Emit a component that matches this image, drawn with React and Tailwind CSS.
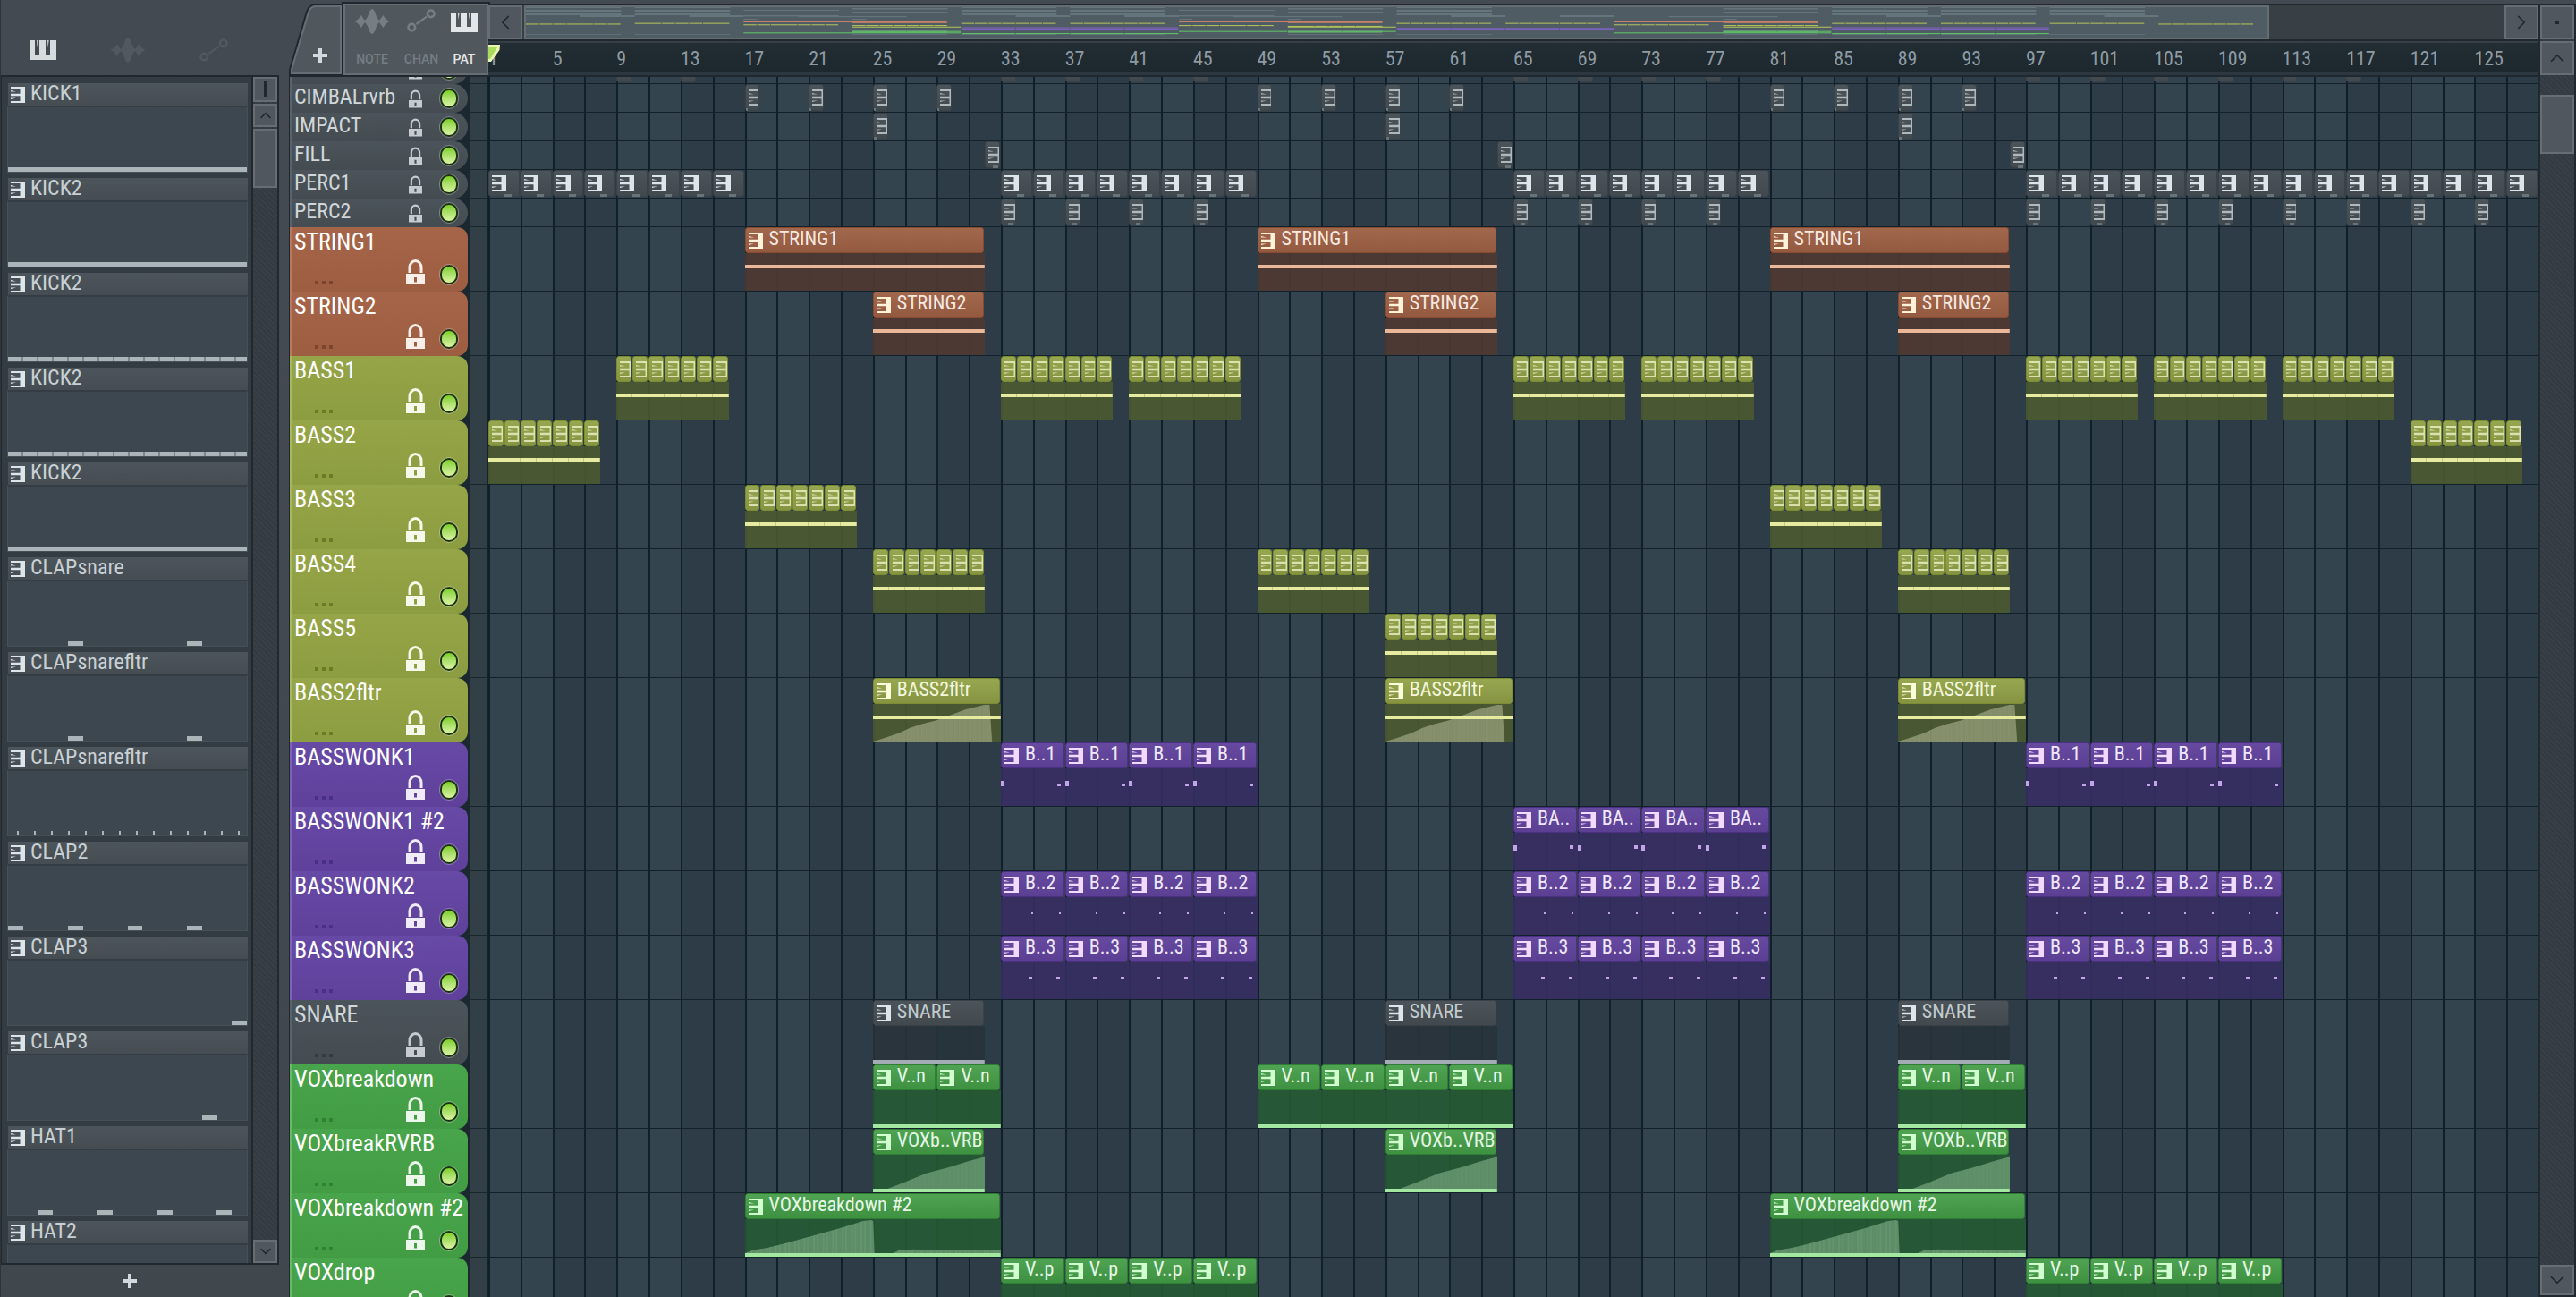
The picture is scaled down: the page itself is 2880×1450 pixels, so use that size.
import { ChevronDown, ChevronLeft, ChevronRight, ChevronUp } from "lucide-react";

const BARS = 128;

const THEMES = {
  grey: {
    header: "bg-linear-to-b from-[#4b545a] to-[#444c51] border-l-[#5a636a] text-[#d0d6d9]",
    clip: "bg-linear-to-b from-[#4b545a] to-[#42494e] border-[#3a4248] text-[#c3cacd]",
    body: "bg-[#28333b]/90",
    line: "bg-[#a3abb4]",
    note: "bg-[#69737a]",
    icon: "text-[#dbe5ea]",
    lock: "text-[#c5cbcf]",
    dots: "bg-[#343c42]",
    map: "#6b7a80",
  },
  orange: {
    header: "bg-linear-to-b from-[#a66548] to-[#9d5d41] border-l-[#b87a5f] text-white",
    clip: "bg-linear-to-b from-[#a2684d] to-[#945a41] border-[#8a4a2e] text-[#f6e9e2]",
    body: "bg-[#503931]/90",
    line: "bg-[#ebb799]",
    note: "bg-[#ebb799]",
    icon: "text-[#fff2d8]",
    lock: "text-[#f8efeb]",
    dots: "bg-[#7d452d]",
    map: "#c98169",
  },
  olive: {
    header: "bg-linear-to-b from-[#95a547] to-[#8c9c40] border-l-[#a9b85f] text-white",
    clip: "bg-linear-to-b from-[#97a750] to-[#869442] border-[#7c8c30] text-[#f3f6dc]",
    body: "bg-[#4b5a30]/90",
    line: "bg-[#e6eba0]",
    note: "bg-[#e6eba0]",
    icon: "text-[#fcffda]",
    lock: "text-[#f6f8ec]",
    dots: "bg-[#6b7a24]",
    map: "#b8c65c",
  },
  purple: {
    header: "bg-linear-to-b from-[#674aa6] to-[#5f419b] border-l-[#7d62b8] text-white",
    clip: "bg-linear-to-b from-[#664aa0] to-[#5a3f93] border-[#4b3084] text-[#f0e8fa]",
    body: "bg-[#362d62]/90",
    line: "bg-[#c3a3ea]",
    note: "bg-[#c3a3ea]",
    icon: "text-[#f2daff]",
    lock: "text-[#efebf8]",
    dots: "bg-[#4a2f86]",
    map: "#8465cf",
  },
  green: {
    header: "bg-linear-to-b from-[#49a54b] to-[#419c43] border-l-[#68b969] text-white",
    clip: "bg-linear-to-b from-[#4fa352] to-[#3f9142] border-[#2f7f33] text-[#e5f7e4]",
    body: "bg-[#255a33]/90",
    line: "bg-[#a3e8a0]",
    note: "bg-[#a3e8a0]",
    icon: "text-[#d2ffcf]",
    lock: "text-[#edf8ec]",
    dots: "bg-[#2f8233]",
    map: "#63c86a",
  },
};

const every = (step, count, ...starts) =>
  starts.flatMap((s) => Array.from({ length: count }, (_, i) => s + i * step));

// notes are [x, y, width, height] inside a clip
const LANES = [
  { name: "", small: true, theme: "grey", len: 1, clips: [9, 13, 33, 37, 41, 45, 65, 69, 73, 77, 97, 101, 105, 109, 113, 117] },
  { name: "CIMBALrvrb", small: true, theme: "grey", len: 1, clips: every(4, 4, 17, 49, 81), faded: true, notes: [[1, 27, 2, 3]] },
  { name: "IMPACT", small: true, theme: "grey", len: 1, clips: [25, 57, 89], faded: true, notes: [[1, 27, 3, 3]] },
  { name: "FILL", small: true, theme: "grey", len: 1, clips: [32, 64, 96], faded: true, notes: [[9, 27, 6, 3]] },
  { name: "PERC1", small: true, theme: "grey", len: 2, clips: [...every(2, 8, 1, 33, 65), ...every(2, 16, 97)], notes: [[18, 27, 8, 3]] },
  { name: "PERC2", small: true, theme: "grey", len: 1, clips: [...every(4, 4, 33, 65), ...every(4, 8, 97)], faded: true, notes: [[8, 27, 5, 3]] },
  { name: "STRING1", theme: "orange", len: 15, clips: [17, 49, 81], label: "STRING1", line: "mid" },
  { name: "STRING2", theme: "orange", len: 7, clips: [25, 57, 89], label: "STRING2", line: "mid" },
  { name: "BASS1", theme: "olive", len: 1, clips: every(1, 7, 9, 33, 41, 65, 73, 97, 105, 113), faded: true, line: "mid" },
  { name: "BASS2", theme: "olive", len: 1, clips: every(1, 7, 1, 121), faded: true, line: "mid" },
  { name: "BASS3", theme: "olive", len: 1, clips: every(1, 7, 17, 81), faded: true, line: "mid" },
  { name: "BASS4", theme: "olive", len: 1, clips: every(1, 7, 25, 49, 89), faded: true, line: "mid" },
  { name: "BASS5", theme: "olive", len: 1, clips: every(1, 7, 57), faded: true, line: "mid" },
  { name: "BASS2fltr", theme: "olive", len: 8, clips: [25, 57, 89], label: "BASS2fltr", line: "mid", ramp: "filter" },
  { name: "BASSWONK1", theme: "purple", len: 4, clips: every(4, 4, 33, 97), label: "B..1", notes: [[0, 43, 4, 6], [63, 46, 4, 3]] },
  { name: "BASSWONK1 #2", theme: "purple", len: 4, clips: every(4, 4, 65), label: "BA..", notes: [[0, 43, 4, 6], [63, 43, 4, 4]] },
  { name: "BASSWONK2", theme: "purple", len: 4, clips: every(4, 4, 33, 65, 97), label: "B..2", notes: [[34, 46, 2, 2], [65, 46, 2, 2]] },
  { name: "BASSWONK3", theme: "purple", len: 4, clips: every(4, 4, 33, 65, 97), label: "B..3", notes: [[31, 46, 4, 3], [62, 46, 4, 3]] },
  { name: "SNARE", theme: "grey", len: 7, clips: [25, 57, 89], label: "SNARE", line: "low" },
  { name: "VOXbreakdown", theme: "green", len: 4, clips: [25, 29, 49, 53, 57, 61, 89, 93], label: "V..n", line: "low" },
  { name: "VOXbreakRVRB", theme: "green", len: 7, clips: [25, 57, 89], label: "VOXb..VRB", line: "low", ramp: "reverb" },
  { name: "VOXbreakdown #2", theme: "green", len: 16, clips: [17, 81], label: "VOXbreakdown #2", line: "low", ramp: "drop" },
  { name: "VOXdrop", theme: "green", len: 4, clips: every(4, 4, 33, 97), label: "V..p" },
];

const RAMPS = {
  filter: "M0 41L7 38L20 32L29 26L38 22L49 18L61 12L72 6L87 1L91 1L93 41Z",
  reverb: "M0 41L11 38L28 30L48 20L67 14L85 7L100 2V41Z",
  drop: "M0 37L3 34L9 31L16 26L29 16L38 9L46 2L49 1L50 2L50.5 38L57 38L60 34L66 33L68 34H100V41H0Z",
};

const FULL = [[0, 100]];
const PICKER = [
  { name: "KICK1", notes: FULL },
  { name: "KICK2", notes: FULL },
  { name: "KICK2", notes: FULL, ticks: true },
  { name: "KICK2", notes: FULL, ticks: true },
  { name: "KICK2", notes: FULL },
  { name: "CLAPsnare", notes: [[25, 6.3], [75, 6.3]] },
  { name: "CLAPsnarefltr", notes: [[25, 6.3], [75, 6.3]] },
  { name: "CLAPsnarefltr", notes: Array.from({ length: 14 }, (_, i) => [3.7 + i * 7.12, 0.9]) },
  { name: "CLAP2", notes: [[0, 6.3], [25, 6.3], [50, 6.3], [75, 6.3]] },
  { name: "CLAP3", notes: [[93.7, 6.3]] },
  { name: "CLAP3", notes: [[81.2, 6.3]] },
  { name: "HAT1", notes: [[12.5, 6.3], [37.5, 6.3], [62.5, 6.3], [87.3, 6.3]] },
  { name: "HAT2", notes: [] },
];

// Overview rows for the tracks scrolled out above: [y, height, start, bars]
const HIDDEN_ROWS = [
  ...[1, 9, 33, 41, 65, 97, 105, 113].flatMap((s) => [[0, 1, s, 7], [3, 2, s, 7], [7, 2, s, 7], [15, 0.8, s, 7], [30, 0.8, s, 7]]),
  ...[17, 49].flatMap((s) => [[3, 1, s, 7], [9, 1.4, s, 7], [13, 1, s, 1]]),
  ...[25, 57, 89].flatMap((s) => [[1, 1.5, s, 7], [5, 1.5, s, 7], [10, 1.2, s - 4, 8], [13, 1.2, s, 1], [30, 0.8, s, 7]]),
  ...[5, 13, 37, 45, 69, 77, 101, 117].map((s) => [9, 2, s, 4]),
];

const btn = "flex items-center justify-center border-2 border-[#666d73] bg-[#50575e] text-[#20272d]";
const hatch = "bg-[repeating-linear-gradient(45deg,#333a42_0_2px,#384047_2px_4px)]";

const KeysSide = ({ className }) => (
  <svg viewBox="0 0 16 18" className={className} fill="currentColor" aria-hidden="true">
    <path d="M0 0H16V18H0V16H10.5V10.2H0V7.8H10.5V2H0Z" />
    <path d="M0 4L6 5.4H0ZM0 12.5H6L0 14Z" />
  </svg>
);

const Keys = ({ className }) => (
  <svg viewBox="0 0 30 22" className={className} fill="currentColor" aria-hidden="true">
    <path d="M0 0H6V16H11V0H18V16H23V0H30V22H0Z" />
    <path d="M8 0H9.6L8.6 8ZM20 0H21.6L20.6 8Z" />
  </svg>
);

const Wave = ({ className }) => (
  <svg viewBox="0 0 40 28" className={className} fill="currentColor" aria-hidden="true">
    <path d="M0 14Q4 13 7 8Q8 6 9 9L12 13Q15 10 17 3Q20 -3 23 3Q25 10 28 13L31 9Q32 6 33 8Q36 13 40 14Q36 15 33 20Q32 22 31 19L28 15Q25 18 23 25Q20 31 17 25Q15 18 12 15L9 19Q8 22 7 20Q4 15 0 14Z" />
  </svg>
);

const Automation = ({ className }) => (
  <svg viewBox="0 0 32 26" className={className} fill="none" stroke="currentColor" strokeWidth="2.6" aria-hidden="true">
    <circle cx="5.3" cy="20.6" r="3.8" />
    <circle cx="26.7" cy="5.3" r="3.8" />
    <path d="M10.5 17L22 8.6" strokeWidth="2.2" />
  </svg>
);

const Plus = () => (
  <svg viewBox="0 0 16 16" className="size-4" fill="#d3d8db" aria-hidden="true">
    <path d="M6 0H10V6H16V10H10V16H6V10H0V6H6Z" />
  </svg>
);

const Lock = ({ className }) => (
  <svg viewBox="0 0 21 28" className={className} aria-hidden="true">
    <path d="M4 15V9A6.5 7.5 0 0 1 17 9V15" fill="none" stroke="currentColor" strokeWidth="3" />
    <path d="M0 16H21V28H0ZM9 20V25.5H12V20Z" fill="currentColor" fillRule="evenodd" />
  </svg>
);

const Led = () => (
  <span className="block h-[22px] w-5 rounded-full border-2 border-[#1c3311] bg-linear-to-b from-[#7ccf1c] to-[#dcf3a4] outline-1 outline-white/30" />
);

const PickerItem = ({ name, notes, ticks }) => (
  <li className="mb-1.5 shrink-0">
    <div className="ml-px flex h-[25px] items-center gap-1.5 bg-linear-to-b from-[#4c555b] to-[#454d53] pl-[3px]">
      <KeysSide className="h-[18px] w-4 text-[#dbe5ea]" />
      <span className="pb-1 text-2xl leading-5 text-[#c9d0d3]">{name}</span>
    </div>
    <div className="relative h-[75px] border border-t-2 border-[#465057] border-t-[#343d44] bg-[#3d474f]">
      {notes.map(([x, w], i) => (
        <span key={i} className="absolute bottom-0 h-[5px] bg-[#abb4b8]" style={{ left: `${x}%`, width: `${w}%` }} />
      ))}
      {ticks && <span className="absolute inset-x-0 bottom-0 h-[5px] bg-[repeating-linear-gradient(90deg,transparent_0_15px,#7d878c_15px_17px)]" />}
    </div>
  </li>
);

const Picker = () => (
  <aside className="flex w-[312px] shrink-0 flex-col border-l border-[#2d353b]">
    <div className="flex h-[84px] shrink-0 items-end pb-[14px] text-[#50595e]">
      <button aria-label="Patterns" className="ml-8 text-[#d6dbde]"><Keys className="mb-[3px] h-[22px] w-[30px]" /></button>
      <button aria-label="Audio" className="ml-[60px]"><Wave className="h-7 w-10" /></button>
      <button aria-label="Automation" className="ml-[60px]"><Automation className="mb-px h-[26px] w-8" /></button>
    </div>
    <div className="flex min-h-0 flex-1 border-2 border-l-1 border-[#21292f] bg-[#333c43]">
      <ul className="flex min-w-0 flex-1 flex-col overflow-hidden pt-[7px] pr-1 pl-1.5">
        {PICKER.map((item, i) => <PickerItem key={i} {...item} />)}
      </ul>
      <div className={`flex w-[29px] flex-col gap-0.5 border-l-2 border-[#21292f] ${hatch}`}>
        <button aria-label="Resize" className={`h-7 ${btn}`}><span className="h-[18px] w-1 bg-[#20272d]" /></button>
        <button aria-label="Scroll up" className={`h-[26px] ${btn}`}><ChevronUp size={20} strokeWidth={1.8} /></button>
        <div className="h-[66px] border-2 border-[#666d73] bg-[#50575e]" />
        <button aria-label="Scroll down" className={`mt-auto h-[26px] ${btn}`}><ChevronDown size={20} strokeWidth={1.8} /></button>
      </div>
    </div>
    <button aria-label="Add pattern" className="flex h-9 shrink-0 items-center justify-center pr-6"><Plus /></button>
  </aside>
);

const Minimap = () => (
  <svg viewBox="0 0 128 34" preserveAspectRatio="none" className="h-full w-full" aria-hidden="true">
    {HIDDEN_ROWS.map(([y, h, start, len], i) => (
      <rect key={i} x={start - 1} y={y} width={len} height={h} fill="#65757c" />
    ))}
    {LANES.slice(6).map((lane, row) =>
      lane.clips.map((start) => (
        <rect key={lane.name + start} x={start - 1} y={16 + row * 0.82} width={lane.len - 0.05} height="1" fill={THEMES[lane.theme].map} />
      ))
    )}
  </svg>
);

const Ruler = () => (
  <div className="relative flex h-8 bg-linear-to-b from-[#222d34] to-[#1c272e]">
    {Array.from({ length: BARS / 4 }, (_, i) => (
      <span key={i} className="flex-1 basis-0 text-[22px] leading-9 text-[#8f9ba3]">{i * 4 + 1}</span>
    ))}
    <svg viewBox="0 0 14 20" className="absolute top-0.5 left-0 h-5 w-3.5" aria-hidden="true">
      <path d="M0 0H13L12.5 6L3 19H0Z" fill="#e9f5b0" />
      <path d="M0 3H10L2 16H0Z" fill="#a9dc5c" />
    </svg>
  </div>
);

const TopBar = () => (
  <div className="flex h-[86px] shrink-0 border-b-2 border-[#1f282f] pt-1">
    <button aria-label="Add track" className="relative flex w-[61px] items-end justify-center pb-[13px] pl-2">
      <svg viewBox="0 0 61 80" className="absolute inset-0 h-full w-full" aria-hidden="true">
        <path d="M1 80V74L20 9Q23 1 30 1H60V80Z" fill="#50585e" stroke="#1f282f" strokeWidth="2" />
        <path d="M3 78V74L22 10Q24 3 30 3H58V78Z" fill="none" stroke="#666d73" strokeWidth="2" />
      </svg>
      <span className="relative mb-px"><Plus /></span>
    </button>
    <div className="flex w-[162px] justify-between border-2 border-[#666d73] bg-[#50585e] pt-1 pr-2.5 pl-2 font-[Roboto] text-sm font-medium text-[#757e83] outline-2 outline-[#1f282f]">
      <button className="flex w-11 flex-col items-center justify-between pb-1.5"><Wave className="h-7 w-10" />NOTE</button>
      <button className="flex flex-col items-center justify-between pb-1.5"><Automation className="h-[26px] w-8" />CHAN</button>
      <button className="flex flex-col items-center justify-between pt-1 pb-1.5 text-[#e2e6e8]"><Keys className="h-[22px] w-[30px]" />PAT</button>
    </div>
    <div className="flex min-w-0 flex-1 flex-col">
      <div className="flex h-[42px] gap-0.5 border-t-2 border-b-2 border-[#21292f] bg-[#384046]">
        <button aria-label="Scroll left" className={`w-[38px] ${btn}`}><ChevronLeft size={26} strokeWidth={1.6} /></button>
        <div className="flex-1">
          <div className="h-full w-[88.2%] border-2 border-[#636d72] bg-[#4f5c63]"><Minimap /></div>
        </div>
        <button aria-label="Scroll right" className={`w-[38px] ${btn}`}><ChevronRight size={26} strokeWidth={1.6} /></button>
      </div>
      <div className="h-0.5 bg-[#363f46]" />
      <Ruler />
      <div className="flex-1 bg-[#2c373f]" />
    </div>
  </div>
);

const TrackHeader = ({ name, small, theme }) => {
  const t = THEMES[theme];
  if (small) {
    return (
      <div className={`flex w-[199px] items-center rounded-r-2xl border-l-2 pr-[11px] pl-[3px] ${t.header}`}>
        <span className="flex-1 pb-1 text-2xl leading-6">{name}</span>
        <button aria-label={`Lock ${name}`} className={`mr-5 ${t.lock}`}><Lock className="h-[21px] w-[15px]" /></button>
        <button aria-label={`Mute ${name}`}><Led /></button>
      </div>
    );
  }
  return (
    <div className={`flex w-[199px] flex-col justify-between rounded-r-xl border-l-2 pt-0.5 pr-[11px] pb-2 pl-[3px] ${t.header}`}>
      <span className="text-[26px] leading-7 whitespace-nowrap">{name}</span>
      <div className="flex items-end">
        <span className="flex flex-1 gap-1 pl-[23px]">
          <i className={`size-1 ${t.dots}`} />
          <i className={`size-1 ${t.dots}`} />
          <i className={`size-1 ${t.dots}`} />
        </span>
        <button aria-label={`Lock ${name}`} className={`mr-[17px] ${t.lock}`}><Lock className="h-7 w-[21px]" /></button>
        <button aria-label={`Mute ${name}`}><Led /></button>
      </div>
    </div>
  );
};

const Ramp = ({ shape, color }) => (
  <svg viewBox="0 0 100 41" preserveAspectRatio="none" className={`absolute inset-0 h-full w-full ${color}`} aria-hidden="true">
    <defs>
      <pattern id={`stripes-${shape}`} width="3.7" height="41" patternUnits="userSpaceOnUse">
        <path d="M0 0H3.7V41H0Z" fill="currentColor" fillOpacity="0.32" />
        <path d="M1 0V41M2.4 0V41" stroke="currentColor" strokeOpacity="0.08" strokeWidth="0.5" />
      </pattern>
    </defs>
    <path d={RAMPS[shape]} fill={`url(#stripes-${shape})`} />
  </svg>
);

const Clip = ({ lane, start }) => {
  const t = THEMES[lane.theme];
  return (
    <div
      className="absolute inset-y-0 flex flex-col overflow-hidden"
      style={{ left: `${((start - 1) / BARS) * 100}%`, width: `${(lane.len / BARS) * 100}%` }}
    >
      <div className={`mr-px flex shrink-0 items-center gap-[7px] overflow-hidden rounded-[3px] border pl-[3px] ${lane.small ? "h-[30px]" : "h-[29px]"} ${t.clip}`}>
        <KeysSide className={`h-[18px] w-4 shrink-0 ${t.icon} ${lane.faded ? "opacity-70" : ""}`} />
        {lane.label && <span className="pb-1 text-[22px] leading-6 whitespace-nowrap">{lane.label}</span>}
      </div>
      {!lane.small && (
        <div className={`relative flex-1 ${t.body}`}>
          {lane.ramp && <Ramp shape={lane.ramp} color={t.icon} />}
          {lane.line === "mid" && <span className={`absolute inset-x-0 top-[13px] h-1 border-r border-black/15 ${t.line}`} />}
          {lane.line === "low" && <span className={`absolute inset-x-0 bottom-0 h-1 border-r border-black/15 ${t.line}`} />}
        </div>
      )}
      {lane.notes?.map(([x, y, width, height]) => (
        <span key={x} className={`absolute ${t.note}`} style={{ left: x, top: y, width, height }} />
      ))}
    </div>
  );
};

const Playlist = () => (
  <div className="relative min-h-0 flex-1 overflow-hidden border-l border-[#1f282f] bg-[#1c282f]">
    <div className="absolute inset-y-0 right-0 left-[222px] flex">
      {Array.from({ length: BARS / 2 }, (_, i) => (
        <span key={i} className={`flex-1 basis-0 border-l-2 border-[#10202a] ${i % 4 < 2 ? "bg-[#33444f]" : "bg-[#2d3c47]"}`} />
      ))}
    </div>
    <div className="relative -mt-6">
      {LANES.map((lane, i) => (
        <div key={i} className={`flex ${lane.small ? "h-8" : "h-[72px]"}`}>
          <TrackHeader {...lane} />
          <div className="ml-[3px] w-5 border-r-2 border-b border-r-[#17232b] border-b-[#1a262d] bg-[#333f47]" />
          <div className="relative flex-1 border-b border-[#13212a]">
            {lane.clips.map((start) => <Clip key={start} lane={lane} start={start} />)}
          </div>
        </div>
      ))}
    </div>
  </div>
);

export default function App() {
  return (
    <div className="flex h-screen w-full overflow-hidden bg-linear-to-b from-[#434a51] to-[#40474d] font-['Liberation_Sans_Narrow','Roboto_Condensed',Roboto,sans-serif]">
      <Picker />
      <main className="ml-[11px] flex min-w-0 flex-1">
        <div className="flex min-w-0 flex-1 flex-col">
          <TopBar />
          <Playlist />
        </div>
        <div className={`mt-1 flex w-[42px] shrink-0 flex-col gap-0.5 border-2 border-[#21292f] ${hatch}`}>
          <button aria-label="Zoom" className={`h-[38px] ${btn}`}><span className="size-1 bg-[#20272d]" /></button>
          <button aria-label="Scroll up" className={`h-[38px] ${btn}`}><ChevronUp size={26} strokeWidth={1.6} /></button>
          <div className="mt-5 h-[66px] border-2 border-[#666d73] bg-[#50575e]" />
          <button aria-label="Scroll down" className={`mt-auto h-[34px] ${btn}`}><ChevronDown size={26} strokeWidth={1.6} /></button>
        </div>
      </main>
    </div>
  );
}
